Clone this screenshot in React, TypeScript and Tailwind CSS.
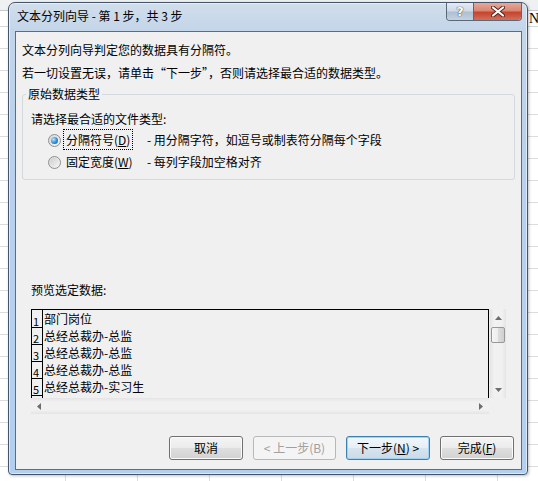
import React from "react";

const cols = [66, 72, 72, 72, 72, 72, 72, 72];
const sheetRows = Array.from({ length: 21 }, (_, i) => i);

const preview = [
  "部门岗位",
  "总经总裁办-总监",
  "总经总裁办-总监",
  "总经总裁办-总监",
  "总经总裁办-实习生",
  "",
];

const Sheet = () => (
  <div className="flex flex-col">
    <div className="h-[11px] border-b border-[#c6c9cc] bg-[#eef0f2]" />
    <div className="flex h-[16px] items-center border-b border-[#d4d6d8] pl-[529px] font-['Liberation_Serif',serif] text-[14px] leading-[14px] text-black">
      N
    </div>
    {sheetRows.map((r) => (
      <div key={r} className="flex h-[22px] border-b border-[#dadcdd]">
        {cols.map((w, c) => (
          <div
            key={c}
            className={c === 0 ? "h-full w-[66px] shrink-0 border-r border-[#dadcdd]" : "h-full w-[72px] shrink-0 border-r border-[#dadcdd]"}
          />
        ))}
      </div>
    ))}
  </div>
);

const Arrow = ({ dir }: { dir: "up" | "down" | "left" | "right" }) => {
  const pts = {
    up: "0,4 3.5,0 7,4",
    down: "0,0 7,0 3.5,4",
    left: "4,0 4,7 0,3.5",
    right: "0,0 0,7 4,3.5",
  }[dir];
  const vertical = dir === "up" || dir === "down";
  return (
    <svg width={vertical ? 7 : 4} height={vertical ? 4 : 7} viewBox={vertical ? "0 0 7 4" : "0 0 4 7"}>
      <polygon points={pts} fill="#6d6d6d" />
    </svg>
  );
};

const Radio = ({ checked }: { checked?: boolean }) => (
  <div className="flex h-[13px] w-[13px] shrink-0 items-center justify-center rounded-full border border-[#8e8f8f] bg-[linear-gradient(135deg,#d8d8d8,#f6f6f6)]">
    {checked ? (
      <div className="h-[7px] w-[7px] rounded-full bg-[radial-gradient(circle_at_35%_35%,#bfe6fd,#2f8ad6_55%,#0e5aa0)]" />
    ) : (
      <div className="h-[9px] w-[9px] rounded-full bg-[linear-gradient(135deg,#cfcfcf,#f4f4f4)]" />
    )}
  </div>
);

const btnBase =
  "flex h-[24px] items-center justify-center rounded-[3px] border text-[12px] leading-[16px]";
const btnNormal =
  "border-[#707070] bg-[linear-gradient(180deg,#f4f4f4_0%,#ececec_48%,#dedede_52%,#d2d2d2_100%)] text-black shadow-[inset_0_0_0_1px_#fbfbfb]";

const App = () => {
  return (
    <div className="relative h-[481px] w-[538px] overflow-hidden bg-white font-['Noto_Sans_CJK_SC','Microsoft_YaHei',sans-serif]">
      <Sheet />

      {/* dialog window */}
      <div className="absolute left-[8px] top-[2px] flex h-[473px] w-[520px] flex-col rounded-t-[7px] rounded-b-[4px] border border-[#44546a] bg-[linear-gradient(180deg,#d1deeb_0%,#c3d5e9_6%,#b9d1ed_30%,#b3cff0_100%)] pb-[4px] pl-[6px] pr-[5px] shadow-[inset_0_0_0_1px_rgba(255,255,255,0.55),1px_1px_3px_rgba(0,0,0,0.25)]">
        {/* title bar */}
        <div className="flex h-[28px] items-start justify-between">
          <div className="pl-[2px] pt-[5px] text-[12px] leading-[16px] text-black">
            文本分列向导 - 第 1 步，共 3 步
          </div>
          <div className="flex h-[18px] overflow-hidden rounded-b-[4px] border border-t-0 border-[#5a6878]">
            <div className="flex h-full w-[27px] items-center justify-center border-r border-[#5a6878] bg-[linear-gradient(180deg,#e4ebf3_0%,#cfdae6_45%,#aebfd2_55%,#c4d2e1_100%)] font-['DejaVu_Sans',sans-serif] text-[13px] font-bold leading-none text-white [text-shadow:0_0_1px_#34404d,0_0_1px_#34404d]">
              ?
            </div>
            <div className="flex h-full w-[47px] items-center justify-center bg-[linear-gradient(180deg,#e9a797_0%,#d98773_45%,#c5442e_55%,#d2705a_100%)]">
              <svg width="14" height="11" viewBox="0 0 14 11">
                <path d="M2 1.5 L12 9.5 M12 1.5 L2 9.5" stroke="#5b2119" strokeWidth="4" strokeLinecap="round" />
                <path d="M2 1.5 L12 9.5 M12 1.5 L2 9.5" stroke="#ffffff" strokeWidth="2.2" strokeLinecap="round" />
              </svg>
            </div>
          </div>
        </div>

        {/* client area */}
        <div className="flex flex-1 flex-col border border-[#5d6d80] bg-[#f0f0f0] text-[12px] leading-[16px] text-black">
          <div className="ml-[6px] mt-[10px]">文本分列向导判定您的数据具有分隔符。</div>
          <div className="ml-[6px] mt-[7px]">若一切设置无误，请单击“下一步”，否则请选择最合适的数据类型。</div>

          <fieldset className="ml-[6px] mr-[6px] mt-[5px] rounded-[3px] border border-[#d3d9de] pb-[6px] pl-[3px]">
            <legend className="px-[2px] leading-[16px]">原始数据类型</legend>
            <div className="ml-[5px] mt-[9px]">请选择最合适的文件类型:</div>
            <div className="ml-[5px] mt-[2px] flex h-[22px] items-center">
              <div className="ml-[17px]">
                <Radio checked />
              </div>
              <div className="ml-[2px] w-[84px]">
                <span className="border border-dotted border-black px-[2px] py-[1px]">
                  分隔符号(<span className="underline">D</span>)
                </span>
              </div>
              <div>- 用分隔字符，如逗号或制表符分隔每个字段</div>
            </div>
            <div className="ml-[5px] flex h-[22px] items-center">
              <div className="ml-[17px]">
                <Radio />
              </div>
              <div className="ml-[2px] w-[84px] px-[3px]">
                固定宽度(<span className="underline">W</span>)
              </div>
              <div>- 每列字段加空格对齐</div>
            </div>
          </fieldset>

          <div className="ml-[15px] mt-[102px]">预览选定数据:</div>

          {/* preview */}
          <div className="ml-[15px] mt-[11px] flex w-[475px] flex-col">
            <div className="flex h-[89px]">
              <div className="flex h-full w-[458px] flex-col overflow-hidden border-l border-r border-t border-black">
                {preview.map((t, i) => (
                  <div key={i} className="flex h-[17px] shrink-0">
                    <div
                      className={
                        i === 0
                          ? "flex w-[11px] shrink-0 items-end border-r border-black pl-[1px] text-[11px] leading-[12px]"
                          : "flex w-[11px] shrink-0 items-end border-r border-t border-black pl-[1px] text-[11px] leading-[12px]"
                      }
                    >
                      {i + 1}
                    </div>
                    <div className="pl-[1px] leading-[17px]">{t}</div>
                  </div>
                ))}
              </div>
              <div className="ml-[1px] flex h-full w-[16px] flex-col bg-[linear-gradient(90deg,#e4e4e4,#f1f1f1_25%,#f1f1f1_75%,#e4e4e4)]">
                <div className="flex h-[17px] items-center justify-center">
                  <Arrow dir="up" />
                </div>
                <div className="mx-[1px] mt-[1px] h-[16px] rounded-[2px] border border-[#979797] bg-[linear-gradient(90deg,#f6f6f6,#ececec_50%,#dcdcdc_52%,#d0d0d0)]" />
                <div className="flex-1" />
                <div className="flex h-[17px] items-center justify-center">
                  <Arrow dir="down" />
                </div>
              </div>
            </div>
            <div className="flex h-[16px]">
              <div className="flex h-full w-[458px] items-center justify-between bg-[linear-gradient(180deg,#e4e4e4,#f1f1f1_25%,#f1f1f1_75%,#e4e4e4)] px-[6px]">
                <Arrow dir="left" />
                <Arrow dir="right" />
              </div>
              <div className="ml-[1px] h-full w-[16px] bg-[#f0f0f0]" />
            </div>
          </div>

          {/* buttons */}
          <div className="mb-[9px] mr-[7px] mt-auto flex justify-end gap-[10px]">
            <div className={`${btnBase} ${btnNormal} w-[74px]`}>取消</div>
            <div className={`${btnBase} w-[83px] border-[#b5b9bc] bg-[#f4f4f4] text-[#a0a0a0]`}>&lt; 上一步(B)</div>
            <div className={`${btnBase} w-[84px] border-[#3c7fb1] bg-[linear-gradient(180deg,#f1f7fb_0%,#e6eff6_48%,#d7e4ee_52%,#cbdae6_100%)] text-black shadow-[inset_0_0_0_1px_#9fd3f5]`}>
              下一步(<span className="underline">N</span>) &gt;
            </div>
            <div className={`${btnBase} ${btnNormal} w-[74px]`}>
              完成(<span className="underline">F</span>)
            </div>
          </div>
        </div>
      </div>
    </div>
  );
};

export default App;
